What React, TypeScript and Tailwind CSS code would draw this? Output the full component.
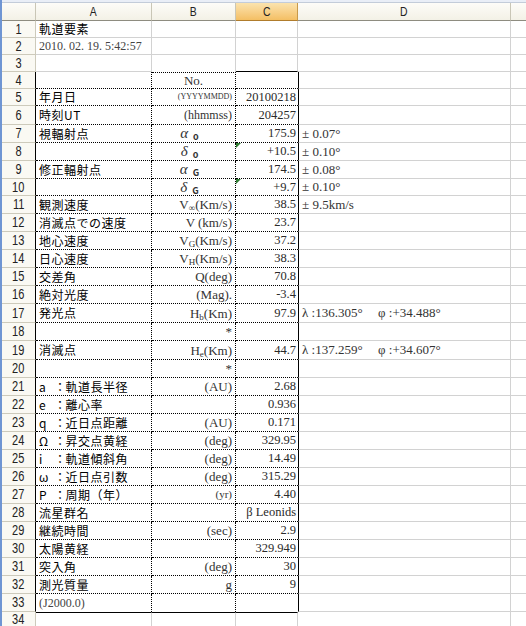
import React from 'react';

const serif = "font-['Liberation_Serif','Noto_Sans_CJK_JP',serif]";
const gothic = "font-['Noto_Sans_CJK_JP','Liberation_Sans',sans-serif]";

type Row = {
  n: number;
  h: string;
  a?: React.ReactNode;
  aSerif?: boolean;
  b?: React.ReactNode;
  bClass?: string;
  c?: React.ReactNode;
  d?: React.ReactNode;
  flag?: boolean;
};

function Orb({ k, label }: { k: string; label: string }) {
  return (
    <span className="flex items-center">
      <span className="w-[15px]">{k}</span>
      <span>：</span>
      <span className="-ml-[1px]">{label}</span>
    </span>
  );
}

function Radiant({ g, sub }: { g: string; sub: string }) {
  return (
    <span className="flex items-end">
      <span className="italic text-[15px] leading-none">{g}</span>
      <span className={`${gothic} ml-[5px] text-[9px] font-bold leading-none`}>{sub}</span>
    </span>
  );
}

function Unit({ v, sub, rest }: { v: string; sub: string; rest: string }) {
  return (
    <span className="flex items-end leading-none">
      <span>{v}</span>
      <span className="text-[9px] translate-y-[2px]">{sub}</span>
      <span>{rest}</span>
    </span>
  );
}

function LatLon({ l, p }: { l: string; p: string }) {
  return (
    <span className="flex">
      <span className="w-[76px]">λ :{l}°</span>
      <span>φ :{p}°</span>
    </span>
  );
}

const center = 'justify-center pr-[8px] text-[13px]';

const rows: Row[] = [
  { n: 1, h: 'h-[17px]', a: '軌道要素' },
  { n: 2, h: 'h-[17px]', a: '2010. 02. 19. 5:42:57', aSerif: true },
  { n: 3, h: 'h-[17px]' },
  { n: 4, h: 'h-[17px]', b: 'No.', bClass: 'justify-center text-[13px]' },
  { n: 5, h: 'h-[17px]', a: '年月日', b: '(YYYYMMDD)', bClass: 'justify-end pr-[3px] text-[8px]', c: '20100218' },
  { n: 6, h: 'h-[19px]', a: '時刻UT', b: '(hhmmss)', bClass: 'justify-end pr-[3px] text-[12px]', c: '204257' },
  { n: 7, h: 'h-[18px]', a: '視輻射点', b: <Radiant g="α" sub="o" />, bClass: center, c: '175.9', d: '± 0.07°' },
  { n: 8, h: 'h-[18px]', b: <Radiant g="δ" sub="o" />, bClass: center, c: '+10.5', d: '± 0.10°', flag: true },
  { n: 9, h: 'h-[18px]', a: '修正輻射点', b: <Radiant g="α" sub="G" />, bClass: center, c: '174.5', d: '± 0.08°' },
  { n: 10, h: 'h-[17px]', b: <Radiant g="δ" sub="G" />, bClass: center, c: '+9.7', d: '± 0.10°', flag: true },
  { n: 11, h: 'h-[18px]', a: '観測速度', b: <Unit v="V" sub="∞" rest="(Km/s)" />, c: '38.5', d: '± 9.5km/s' },
  { n: 12, h: 'h-[18px]', a: '消滅点での速度', b: 'V (km/s)', c: '23.7' },
  { n: 13, h: 'h-[18px]', a: '地心速度', b: <Unit v="V" sub="G" rest="(Km/s)" />, c: '37.2' },
  { n: 14, h: 'h-[18px]', a: '日心速度', b: <Unit v="V" sub="H" rest="(Km/s)" />, c: '38.3' },
  { n: 15, h: 'h-[18px]', a: '交差角', b: 'Q(deg)', c: '70.8' },
  { n: 16, h: 'h-[18px]', a: '絶対光度', b: '(Mag).', c: '-3.4' },
  { n: 17, h: 'h-[19px]', a: '発光点', b: <Unit v="H" sub="b" rest="(Km)" />, c: '97.9', d: <LatLon l="136.305" p="+34.488" /> },
  { n: 18, h: 'h-[18px]', b: '*' },
  { n: 19, h: 'h-[19px]', a: '消滅点', b: <Unit v="H" sub="e" rest="(Km)" />, c: '44.7', d: <LatLon l="137.259" p="+34.607" /> },
  { n: 20, h: 'h-[18px]', b: '*' },
  { n: 21, h: 'h-[18px]', a: <Orb k="a" label="軌道長半径" />, b: '(AU)', c: '2.68' },
  { n: 22, h: 'h-[18px]', a: <Orb k="e" label="離心率" />, c: '0.936' },
  { n: 23, h: 'h-[18px]', a: <Orb k="q" label="近日点距離" />, b: '(AU)', c: '0.171' },
  { n: 24, h: 'h-[18px]', a: <Orb k="Ω" label="昇交点黄経" />, b: '(deg)', c: '329.95' },
  { n: 25, h: 'h-[18px]', a: <Orb k="i" label="軌道傾斜角" />, b: '(deg)', c: '14.49' },
  { n: 26, h: 'h-[18px]', a: <Orb k="ω" label="近日点引数" />, b: '(deg)', c: '315.29' },
  { n: 27, h: 'h-[18px]', a: <Orb k="P" label="周期（年）" />, b: '(yr)', bClass: 'justify-end pr-[3px] text-[11px]', c: '4.40' },
  { n: 28, h: 'h-[18px]', a: '流星群名', c: 'β Leonids' },
  { n: 29, h: 'h-[18px]', a: '継続時間', b: '(sec)', c: '2.9' },
  { n: 30, h: 'h-[18px]', a: '太陽黄経', c: '329.949' },
  { n: 31, h: 'h-[18px]', a: '突入角', b: '(deg)', c: '30' },
  { n: 32, h: 'h-[18px]', a: '測光質量', b: 'g', c: '9' },
  { n: 33, h: 'h-[18px]', a: '(J2000.0)', aSerif: true },
  { n: 34, h: 'flex-1' },
];

function cellA(n: number) {
  if (n >= 4 && n <= 32) return 'border-r border-b border-dotted border-black';
  if (n === 33) return 'border-r border-dotted border-black';
  if (n === 34) return 'border-t border-r border-[#d2d2d2] border-t-black';
  return 'border-r border-b border-[#d2d2d2]';
}

function cellB(n: number) {
  if (n === 3) return 'border-r border-[#d2d2d2]';
  if (n === 4) return 'border-t border-r border-b border-dotted border-black';
  return cellA(n);
}

function cellC(n: number) {
  if (n === 3) return 'border-r border-b border-[#d2d2d2] border-b-black';
  if (n >= 4 && n <= 32) return 'border-b border-dotted border-black';
  if (n === 33) return '';
  if (n === 34) return 'border-t border-r border-[#d2d2d2] border-t-black';
  return 'border-r border-b border-[#d2d2d2]';
}

function cellD(n: number) {
  if (n >= 4 && n <= 33) return 'border-l border-r border-b border-[#d2d2d2] border-l-black';
  if (n === 34) return 'border-r border-[#d2d2d2]';
  return 'border-r border-b border-[#d2d2d2]';
}

const headCell =
  'flex items-center justify-center border-r border-b border-r-[#c9c6b6] border-b-[#8e8c80] bg-linear-to-b from-[#fdfcf8] to-[#f3f1e6]';

export default function App() {
  return (
    <div className={`w-[526px] h-[626px] overflow-hidden flex flex-col bg-white border-l-2 border-[#6f95d3] ${gothic}`}>
      <div className="h-[3px] bg-[#e9eef7] border-b border-[#c3ccd9]" />
      <div className="flex h-[18px] text-[13px] leading-none text-[#222] font-['Liberation_Sans',sans-serif]">
        <div className={`w-[34px] ${headCell}`} />
        <div className={`w-[116px] ${headCell}`}><span className="inline-block scale-x-[0.8]">A</span></div>
        <div className={`w-[84px] ${headCell}`}><span className="inline-block scale-x-[0.8]">B</span></div>
        <div className="w-[62px] flex items-center justify-center border-r border-b border-r-[#c7994a] border-b-[#b07c2c] bg-linear-to-b from-[#fbe3ae] to-[#f4bf63]">
          <span className="inline-block scale-x-[0.8]">C</span>
        </div>
        <div className={`w-[213px] ${headCell}`}><span className="inline-block scale-x-[0.8]">D</span></div>
        <div className={`flex-1 ${headCell} border-r-0`} />
      </div>
      {rows.map((r) => (
        <div key={r.n} className={`flex ${r.h} min-h-0`}>
          <div
            className={`w-[34px] shrink-0 flex items-center justify-center border-r bg-[#faf9f3] text-[13px] leading-none text-[#222] font-['Liberation_Sans',sans-serif] ${
              r.n >= 4 && r.n <= 33 ? 'border-[#cdcabb] border-r-black border-b' : 'border-[#cdcabb]'
            } ${r.n < 4 ? 'border-b' : ''}`}
          >
            <span className="inline-block scale-x-[0.85] scale-y-[1.1]">{r.n}</span>
          </div>
          <div
            className={`w-[116px] shrink-0 flex items-center pl-[3px] whitespace-nowrap overflow-visible ${cellA(r.n)} ${
              r.aSerif ? `${serif} text-[12px] text-[#444]` : 'text-[12px] tracking-[0.5px] text-black'
            }`}
          >
            {r.a}
          </div>
          <div
            className={`w-[84px] shrink-0 flex items-center whitespace-nowrap ${serif} text-[#333] ${cellB(r.n)} ${
              r.bClass ?? 'justify-end pr-[3px] text-[13px]'
            }`}
          >
            {r.b}
          </div>
          <div
            className={`relative w-[62px] shrink-0 flex items-center justify-end pr-[2px] whitespace-nowrap ${serif} text-[12.5px] text-[#2a2a2a] ${cellC(
              r.n
            )}`}
          >
            {r.flag && (
              <span className="absolute left-0 top-0 w-0 h-0 border-t-[5px] border-r-[5px] border-t-[#2f7d32] border-r-transparent" />
            )}
            {r.c}
          </div>
          <div
            className={`w-[213px] shrink-0 flex items-center pl-[3px] whitespace-nowrap ${serif} text-[13px] text-[#333] ${cellD(r.n)}`}
          >
            {r.d}
          </div>
          <div className={`flex-1 ${r.n === 34 ? '' : 'border-b'} border-[#d2d2d2]`} />
        </div>
      ))}
    </div>
  );
}
